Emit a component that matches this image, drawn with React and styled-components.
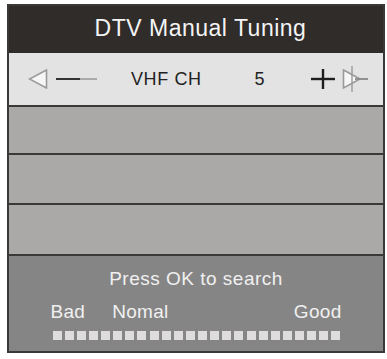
import React from 'react'
import styled, { createGlobalStyle } from 'styled-components'

const GlobalStyle = createGlobalStyle`
  body {
    margin: 0;
    background: #fff;
    font-family: "Liberation Sans", Arial, sans-serif;
  }
`

const Page = styled.div`
  padding: 4px 0 0 7px;
`

const Frame = styled.div`
  width: 378px;
  box-sizing: border-box;
  border: 2px solid #3a3838;
  display: flex;
  flex-direction: column;
`

const Header = styled.div`
  height: 47px;
  background: #2f2c2a;
  color: #f4f4f4;
  font-size: 23px;
  letter-spacing: 0.5px;
  display: flex;
  align-items: center;
  justify-content: center;
  padding: 0 0 3px 9px;
  box-sizing: border-box;
`

const ChannelRow = styled.div`
  height: 54px;
  background: #e3e3e3;
  border-bottom: 2px solid #3a3838;
  box-sizing: border-box;
  display: flex;
  align-items: center;
  padding-left: 19px;
  color: #222;
`

const Label = styled.span`
  font-size: 18px;
  letter-spacing: 0.6px;
  margin-left: ${p => p.gap}px;
`

const Icon = styled.svg`
  display: block;
  flex: none;
  margin-left: ${p => p.gap || 0}px;
`

const EmptyRow = styled.div`
  height: ${p => p.h}px;
  background: #aba8a8;
  border-bottom: 2px solid #3a3838;
`

const Bottom = styled.div`
  height: 95px;
  background: #868585;
  color: #f0f0f0;
  display: flex;
  flex-direction: column;
  align-items: center;
  padding-top: 12px;
  box-sizing: border-box;
`

const Prompt = styled.div`
  font-size: 19px;
  line-height: 22px;
  letter-spacing: 0.5px;
`

const Scale = styled.div`
  width: 291px;
  margin-top: 11px;
`

const ScaleLabels = styled.div`
  display: flex;
  font-size: 19px;
  line-height: 22px;
  letter-spacing: 0.3px;
`

const ScaleLabel = styled.span`
  margin-left: ${p => (p.auto ? 'auto' : `${p.gap || 0}px`)};
`

const Bars = styled.div`
  display: flex;
  justify-content: space-between;
  margin-top: 8px;
  padding: 0 1px 0 2px;
`

const Bar = styled.div`
  width: 9px;
  height: 9px;
  background: #dedcdc;
`

const LeftArrow = () => (
  <Icon width="70" height="20" viewBox="0 0 70 20">
    <polygon points="18.5,1 1.5,10 18.5,19" fill="#f6f6f6" stroke="#9a9a9a" strokeWidth="1.6" />
    <line x1="28" y1="10" x2="52" y2="10" stroke="#333" strokeWidth="2" />
    <line x1="52" y1="10" x2="69" y2="10" stroke="#aaa" strokeWidth="2" />
  </Icon>
)

const Plus = () => (
  <Icon gap={46} width="24" height="20" viewBox="0 0 24 20">
    <line x1="0" y1="10" x2="24" y2="10" stroke="#1e1e1e" strokeWidth="2.4" />
    <line x1="12" y1="0" x2="12" y2="20" stroke="#1e1e1e" strokeWidth="2.4" />
  </Icon>
)

const RightArrow = () => (
  <Icon gap={7} width="27" height="28" viewBox="0 0 27 28">
    <polygon points="1.5,5 18,14 1.5,23" fill="#f6f6f6" stroke="#9a9a9a" strokeWidth="1.6" />
    <line x1="10" y1="1" x2="10" y2="27" stroke="#9a9a9a" strokeWidth="1.4" />
    <line x1="13" y1="14" x2="26" y2="14" stroke="#8a8a8a" strokeWidth="1.8" />
  </Icon>
)

export default function App() {
  return (
    <Page>
      <GlobalStyle />
      <Frame>
        <Header>DTV Manual Tuning</Header>
        <ChannelRow>
          <LeftArrow />
          <Label gap={33}>VHF CH</Label>
          <Label gap={53}>5</Label>
          <Plus />
          <RightArrow />
        </ChannelRow>
        <EmptyRow h={46} />
        <EmptyRow h={48} />
        <EmptyRow h={49} />
        <Bottom>
          <Prompt>Press OK to search</Prompt>
          <Scale>
            <ScaleLabels>
              <ScaleLabel>Bad</ScaleLabel>
              <ScaleLabel gap={27}>Nomal</ScaleLabel>
              <ScaleLabel auto>Good</ScaleLabel>
            </ScaleLabels>
            <Bars>
              {Array.from({ length: 24 }, (_, i) => (
                <Bar key={i} />
              ))}
            </Bars>
          </Scale>
        </Bottom>
      </Frame>
    </Page>
  )
}
